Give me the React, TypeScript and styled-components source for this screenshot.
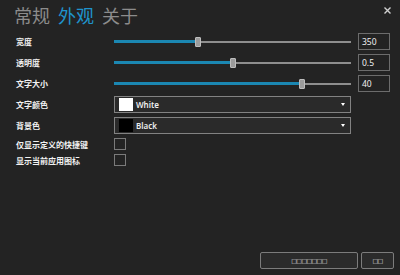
import * as React from 'react';
import styled, { createGlobalStyle } from 'styled-components';

const GlobalStyle = createGlobalStyle`
  html, body {
    margin: 0;
    padding: 0;
    background: #232323;
  }
  * {
    box-sizing: border-box;
  }
`;

const Window = styled.div`
  width: 400px;
  height: 275px;
  background: #232323;
  display: flex;
  flex-direction: column;
  font-family: 'Noto Sans', 'Noto Sans CJK SC', sans-serif;
  color: #ffffff;
  position: relative;
  overflow: hidden;
`;

const Header = styled.div`
  height: 31px;
  display: flex;
  align-items: flex-start;
  gap: 8px;
  padding: 5px 0 0 14px;
`;

const Tab = styled.div<{ $active?: boolean }>`
  font-family: 'Noto Sans CJK SC', sans-serif;
  font-size: 18px;
  line-height: 20px;
  color: ${(p) => (p.$active ? '#1f93cc' : '#8c8c8c')};
`;

const CloseButton = styled.div`
  position: absolute;
  top: 6px;
  right: 8px;
  width: 9px;
  height: 9px;
  display: flex;
`;

const Form = styled.div`
  display: grid;
  grid-template-columns: 91px 237px 32px;
  column-gap: 7px;
  padding-left: 16px;
`;

const Label = styled.div<{ $tall?: boolean }>`
  height: ${(p) => (p.$tall ? 21 : 16)}px;
  display: flex;
  align-items: center;
  font-family: 'Noto Sans CJK SC', sans-serif;
  font-size: 8px;
  font-weight: 700;
  color: #f2f2f2;
  white-space: nowrap;
`;

const Cell = styled.div<{ $span?: boolean; $tall?: boolean }>`
  height: ${(p) => (p.$tall ? 21 : 16)}px;
  display: flex;
  align-items: center;
  ${(p) => (p.$span ? 'grid-column: span 2;' : '')}
`;

const Track = styled.div`
  position: relative;
  width: 100%;
  height: 2px;
  background: #8e8e8e;
`;

const Fill = styled.div`
  position: absolute;
  left: 0;
  top: -0.5px;
  height: 3px;
  background: #1b87b2;
`;

const Thumb = styled.div`
  position: absolute;
  top: -4px;
  width: 6px;
  height: 10px;
  margin-left: -3px;
  background: #9c9c9c;
  border: 1px solid #bdbdbd;
  border-radius: 1px;
`;

const NumberBox = styled.div`
  width: 32px;
  height: 17px;
  border: 1px solid #6c6c6c;
  display: flex;
  align-items: center;
  padding-left: 3px;
  font-size: 8.5px;
  color: #f0f0f0;
`;

const Select = styled.div`
  width: 237px;
  height: 17px;
  border: 1px solid #828282;
  background: #2a2a2a;
  display: flex;
  align-items: center;
  padding: 0 5px 0 4px;
  gap: 3px;
`;

const Swatch = styled.div<{ $color: string }>`
  width: 14px;
  height: 13px;
  background: ${(p) => p.$color};
`;

const SelectText = styled.span`
  flex: 1;
  font-size: 8px;
  font-weight: 600;
  color: #eeeeee;
`;

const Caret = styled.div`
  width: 0;
  height: 0;
  border-left: 2.5px solid transparent;
  border-right: 2.5px solid transparent;
  border-top: 3px solid #ffffff;
`;

const Checkbox = styled.div`
  width: 12px;
  height: 12px;
  border: 1px solid #7a7a7a;
`;

const Spacer = styled.div`
  flex: 1;
`;

const Footer = styled.div`
  display: flex;
  justify-content: flex-end;
  gap: 3px;
  padding: 0 6px 6px 0;
`;

const Button = styled.div<{ $width: number }>`
  width: ${(p) => p.$width}px;
  height: 17px;
  border: 1px solid #7c7c7c;
  border-radius: 2px;
  background: #2b2b2b;
  display: flex;
  align-items: center;
  justify-content: center;
  font-family: 'DejaVu Sans', sans-serif;
  font-size: 6px;
  letter-spacing: -0.6px;
  color: #e6e6e6;
`;

type SliderProps = { value: number };

function Slider({ value }: SliderProps) {
  return (
    <Track>
      <Fill style={{ width: `${value}%` }} />
      <Thumb style={{ left: `${value}%` }} />
    </Track>
  );
}

const sliders = [
  { label: '宽度', value: 35.4, text: '350' },
  { label: '透明度', value: 50.2, text: '0.5' },
  { label: '文字大小', value: 79.3, text: '40' },
];

const selects = [
  { label: '文字颜色', color: '#ffffff', text: 'White' },
  { label: '背景色', color: '#000000', text: 'Black' },
];

const checks = ['仅显示定义的快捷键', '显示当前应用图标'];

export default function App() {
  return (
    <>
      <GlobalStyle />
      <Window>
        <Header>
          <Tab>常规</Tab>
          <Tab $active>外观</Tab>
          <Tab>关于</Tab>
        </Header>
        <CloseButton>
          <svg width="9" height="9" viewBox="0 0 9 9">
            <path d="M1.5 1.5 L7.5 7.5 M7.5 1.5 L1.5 7.5" stroke="#d0d0d0" strokeWidth="1.4" />
          </svg>
        </CloseButton>
        <Form>
          {sliders.map((s) => (
            <React.Fragment key={s.label}>
              <Label $tall>{s.label}</Label>
              <Cell $tall>
                <Slider value={s.value} />
              </Cell>
              <Cell $tall>
                <NumberBox>{s.text}</NumberBox>
              </Cell>
            </React.Fragment>
          ))}
          {selects.map((s) => (
            <React.Fragment key={s.label}>
              <Label $tall>{s.label}</Label>
              <Cell $tall $span>
                <Select>
                  <Swatch $color={s.color} />
                  <SelectText>{s.text}</SelectText>
                  <Caret />
                </Select>
              </Cell>
            </React.Fragment>
          ))}
          {checks.map((c) => (
            <React.Fragment key={c}>
              <Label>{c}</Label>
              <Cell $span>
                <Checkbox />
              </Cell>
            </React.Fragment>
          ))}
        </Form>
        <Spacer />
        <Footer>
          <Button $width={98}>□□□□□□□</Button>
          <Button $width={33}>□□</Button>
        </Footer>
      </Window>
    </>
  );
}
